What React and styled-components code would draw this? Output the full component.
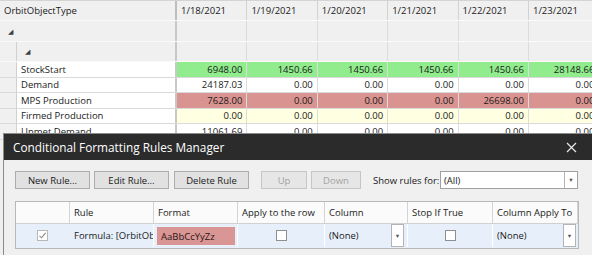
import React from "react";
import styled, { createGlobalStyle } from "styled-components";

const GlobalStyle = createGlobalStyle`
  html, body {
    margin: 0;
    padding: 0;
    background: #ffffff;
  }
  body {
    font-family: "Open Sans", "Noto Sans", sans-serif;
  }
  * {
    box-sizing: border-box;
  }
`;

const Page = styled.div`
  position: relative;
  width: 592px;
  height: 255px;
  overflow: hidden;
  background: #f0f0f0;
  font-size: 9.5px;
  color: #1a1a1a;
`;

const Grid = styled.div`
  display: flex;
  flex-direction: column;
  border-top: 1px solid #d4d4d4;
`;

const HeaderRow = styled.div`
  display: flex;
  height: 20px;
  background: #f0f0f0;
  border-bottom: 1px solid #fafafa;
`;

const NameHeader = styled.div`
  width: 177px;
  flex: none;
  padding-left: 4px;
  display: flex;
  align-items: center;
  border-right: 2px solid #bdbdbd;
`;

const DateHeader = styled.div`
  width: 70.4px;
  flex: none;
  padding-left: 4px;
  display: flex;
  align-items: center;
  border-right: 1px solid #d2d2d2;
`;

const GroupRow = styled.div`
  display: flex;
  height: ${p => p.$h}px;
  border-bottom: 1px solid #fafafa;
`;

const Gutter = styled.div`
  width: ${p => p.$w}px;
  flex: none;
  border-right: 1px solid ${p => p.$line ? "#d0d0d0" : "transparent"};
  background: #f0f0f0;
`;

const GroupLabel = styled.div`
  width: ${p => p.$w}px;
  flex: none;
  display: flex;
  align-items: center;
  padding-left: 8px;
  border-right: 2px solid #c8c8c8;
  font-size: 7px;
  color: #404040;
`;

const EmptyCell = styled.div`
  width: 70.4px;
  flex: none;
  border-right: 1px solid #dcdcdc;
`;

const DataRow = styled.div`
  display: flex;
  height: 15.5px;
  border-bottom: 1px solid #dadada;
`;

const NameCell = styled.div`
  width: 160px;
  flex: none;
  padding-left: 4px;
  background: #ffffff;
  display: flex;
  align-items: center;
  border-right: 2px solid #c8c8c8;
  white-space: nowrap;
`;

const ValueCell = styled.div`
  width: 70.4px;
  flex: none;
  padding-right: 4px;
  display: flex;
  align-items: center;
  justify-content: flex-end;
  background: ${p => p.$bg || "#ffffff"};
  border-right: 1px solid #dcdcdc;
  white-space: nowrap;
  overflow: hidden;
`;

const Dialog = styled.div`
  position: absolute;
  top: 133px;
  left: 3px;
  right: -6px;
  bottom: -10px;
  background: #f0f0f0;
  border: 1px solid #8a8a8a;
  display: flex;
  flex-direction: column;
`;

const TitleBar = styled.div`
  height: 26px;
  background: #2b2b2b;
  color: #ffffff;
  display: flex;
  align-items: center;
  justify-content: space-between;
  padding: 0 14px 0 9px;
  font-size: 11.8px;
`;

const CloseButton = styled.span`
  display: flex;
  align-items: center;
  margin-right: 6px;
`;

const Body = styled.div`
  display: flex;
  flex-direction: column;
  padding: 11px 0 0 11px;
  gap: 12px;
`;

const Toolbar = styled.div`
  display: flex;
  align-items: center;
  height: 18px;
`;

const Button = styled.div`
  width: ${p => p.$w || 75}px;
  height: 18px;
  display: flex;
  align-items: center;
  justify-content: center;
  background: ${p => p.$disabled ? "#e6e6e6" : "#e1e1e1"};
  border: 1px solid ${p => p.$disabled ? "#c6c6c6" : "#adadad"};
  color: ${p => p.$disabled ? "#a3a3a3" : "#1a1a1a"};
  margin-right: ${p => p.$gap}px;
`;

const ShowLabel = styled.span`
  width: 67px;
  white-space: nowrap;
`;

const Combo = styled.div`
  width: 138px;
  height: 18px;
  display: flex;
  background: #ffffff;
  border: 1px solid #a0a0a0;
`;

const ComboText = styled.div`
  flex: 1;
  padding-left: 3px;
  display: flex;
  align-items: center;
`;

const ArrowBox = styled.div`
  width: 13px;
  flex: none;
  border-left: 1px solid #b4b4b4;
  ${p => p.$boxed ? "border: 1px solid #b4b4b4; background: #ffffff; align-self: stretch;" : ""}
  margin-right: ${p => p.$mr || 0}px;
  display: flex;
  align-items: center;
  justify-content: center;
  font-size: 5.5px;
  color: #555555;
`;

const Table = styled.div`
  width: 564px;
  border: 1px solid #b8b8b8;
  background: #ffffff;
`;

const TRow = styled.div`
  display: flex;
  height: ${p => p.$h}px;
  background: ${p => p.$bg};
  border-bottom: 1px solid ${p => p.$bb || "transparent"};
`;

const TCell = styled.div`
  width: ${p => p.$w}px;
  flex: none;
  display: flex;
  align-items: center;
  justify-content: ${p => p.$center ? "center" : "flex-start"};
  padding-left: ${p => p.$pad ?? 4}px;
  border-right: 1px solid ${p => p.$line || "#dadada"};
  white-space: nowrap;
  overflow: hidden;
`;

const Check = styled.div`
  width: 11px;
  height: 11px;
  border: 1px solid ${p => p.$light ? "#b8b8b8" : "#8f8f8f"};
  background: #ffffff;
  display: flex;
  align-items: center;
  justify-content: center;
`;

const FormatSwatch = styled.div`
  margin: 3px 2px 2px 3px;
  flex: 1;
  align-self: stretch;
  background: #d99694;
  color: #2a1414;
  display: flex;
  align-items: center;
  padding-left: 4px;
`;

const ComboCellText = styled.div`
  flex: 1;
`;

const dates = ["1/18/2021", "1/19/2021", "1/20/2021", "1/21/2021", "1/22/2021", "1/23/2021"];

const GREEN = "#90ec8c";
const RED = "#d99390";
const YELLOW = "#ffffe1";

const rows = [
  { name: "StockStart", values: ["6948.00", "1450.66", "1450.66", "1450.66", "1450.66", "28148.66"], bg: GREEN },
  { name: "Demand", values: ["24187.03", "0.00", "0.00", "0.00", "0.00", "0.00"] },
  { name: "MPS Production", values: ["7628.00", "0.00", "0.00", "0.00", "26698.00", "0.00"], bg: RED },
  { name: "Firmed Production", values: ["0.00", "0.00", "0.00", "0.00", "0.00", "0.00"], bg: YELLOW },
  { name: "Unmet Demand", values: ["11061.69", "0.00", "0.00", "0.00", "0.00", "0.00"] },
];

const columns = [
  { label: "", w: 54 },
  { label: "Rule", w: 84 },
  { label: "Format", w: 84 },
  { label: "Apply to the row", w: 87 },
  { label: "Column", w: 83 },
  { label: "Stop If True", w: 85 },
  { label: "Column Apply To", w: 85 },
];

const Tick = () => (
  <svg width="9" height="9" viewBox="0 0 9 9">
    <path d="M1.5 4.8 L3.6 6.8 L7.6 1.8" fill="none" stroke="#8a8a8a" strokeWidth="1.1" />
  </svg>
);

const CloseIcon = () => (
  <svg width="11" height="11" viewBox="0 0 11 11">
    <path d="M1 1 L10 10 M10 1 L1 10" stroke="#e8e8e8" strokeWidth="1.2" />
  </svg>
);

const App = () => (
  <>
    <GlobalStyle />
    <Page>
      <Grid>
        <HeaderRow>
          <NameHeader>OrbitObjectType</NameHeader>
          {dates.map(d => <DateHeader key={d}>{d}</DateHeader>)}
        </HeaderRow>
        <GroupRow $h={21}>
          <GroupLabel $w={177}>◢</GroupLabel>
          {dates.map(d => <EmptyCell key={d} />)}
        </GroupRow>
        <GroupRow $h={20}>
          <Gutter $w={17} $line />
          <GroupLabel $w={160}>◢</GroupLabel>
          {dates.map(d => <EmptyCell key={d} />)}
        </GroupRow>
        {rows.map(r => (
          <DataRow key={r.name}>
            <Gutter $w={17} $line />
            <NameCell>{r.name}</NameCell>
            {r.values.map((v, i) => <ValueCell key={i} $bg={r.bg}>{v}</ValueCell>)}
          </DataRow>
        ))}
      </Grid>

      <Dialog>
        <TitleBar>
          <span>Conditional Formatting Rules Manager</span>
          <CloseButton><CloseIcon /></CloseButton>
        </TitleBar>
        <Body>
          <Toolbar>
            <Button $gap={4}>New Rule...</Button>
            <Button $gap={5}>Edit Rule...</Button>
            <Button $gap={12}>Delete Rule</Button>
            <Button $disabled $w={46} $gap={4}>Up</Button>
            <Button $disabled $w={50} $gap={12}>Down</Button>
            <ShowLabel>Show rules for:</ShowLabel>
            <Combo>
              <ComboText>(All)</ComboText>
              <ArrowBox>▼</ArrowBox>
            </Combo>
          </Toolbar>
          <Table>
            <TRow $h={22} $bg="#fbfbfb" $bb="#d0d0d0">
              {columns.map((c, i) => (
                <TCell key={i} $w={c.w} $line="#d4d4d4">{c.label}</TCell>
              ))}
            </TRow>
            <TRow $h={24} $bg="#e7f0fa">
              <TCell $w={54} $center $pad={0} $line="#e7f0fa"><Check $light><Tick /></Check></TCell>
              <TCell $w={84} $line="#ffffff">Formula: [OrbitOb</TCell>
              <TCell $w={84} $pad={0} $line="#ffffff">
                <FormatSwatch>AaBbCcYyZz</FormatSwatch>
              </TCell>
              <TCell $w={87} $center $pad={0} $line="#ffffff"><Check /></TCell>
              <TCell $w={83} $line="#ffffff">
                <ComboCellText>(None)</ComboCellText>
                <ArrowBox $boxed $mr={3}>▼</ArrowBox>
              </TCell>
              <TCell $w={85} $center $pad={0} $line="#ffffff"><Check /></TCell>
              <TCell $w={85} $line="transparent">
                <ComboCellText>(None)</ComboCellText>
                <ArrowBox $boxed $mr={1}>▼</ArrowBox>
              </TCell>
            </TRow>
          </Table>
        </Body>
      </Dialog>
    </Page>
  </>
);

export default App;
